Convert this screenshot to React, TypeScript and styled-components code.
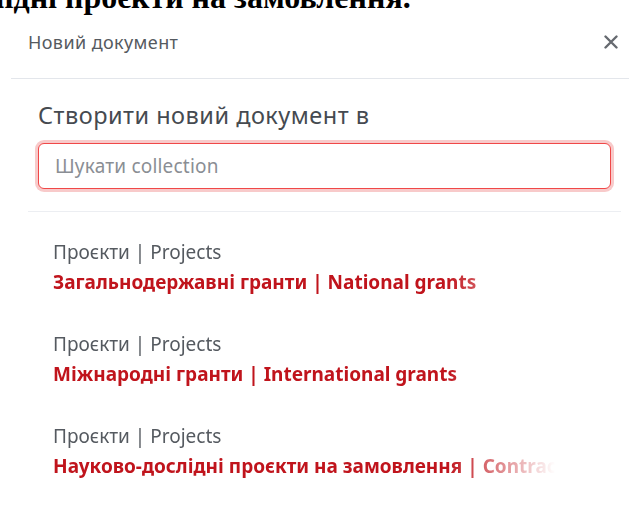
import styled, { createGlobalStyle } from 'styled-components';

const GlobalStyle = createGlobalStyle`
    html, body {
        margin: 0;
        background: #ffffff;
        overflow: hidden;
    }
    body {
        font-family: "Noto Sans", "Open Sans", sans-serif;
    }
`

// the page heading sits behind the dialog, scrolled mostly out of view
const PageHeading = styled.h1`
    margin: -21px 0 2px -192px;
    font-family: "Liberation Serif", "Times New Roman", serif;
    font-weight: 700;
    font-size: 32px;
    line-height: 36px;
    color: #000;
    white-space: nowrap;
`

const Dialog = styled.div`
    margin: 0 0 0 11px;
    display: flex;
    flex-direction: column;
`

const Header = styled.div`
    display: flex;
    align-items: center;
    justify-content: space-between;
    padding: 14px 10px 25px 17px;
    border-bottom: 1.5px solid #e3e6eb;
`

const HeaderTitle = styled.span`
    font-size: 18px;
    line-height: 22px;
    letter-spacing: 0.4px;
    color: #555a60;
`

const CloseButton = styled.button`
    border: 0;
    background: none;
    padding: 0;
    width: 16px;
    height: 16px;
    display: flex;
    align-items: center;
    justify-content: center;
    cursor: pointer;
`

const Body = styled.div`
    padding: 21px 18px 0 27px;
    display: flex;
    flex-direction: column;
`

const Prompt = styled.h2`
    margin: 0 0 13px;
    font-size: 23.5px;
    line-height: 30px;
    letter-spacing: 0.5px;
    font-weight: 400;
    color: #454a50;
`

const SearchInput = styled.input`
    box-sizing: border-box;
    width: 100%;
    height: 46px;
    margin: 0;
    padding: 0 16px;
    border: 1.5px solid #f04848;
    border-radius: 6px;
    box-shadow: 0 0 0 3px rgba(232, 80, 80, 0.3);
    font-family: inherit;
    font-size: 19px;
    letter-spacing: 0.2px;
    color: #333;
    outline: none;

    &::placeholder {
        color: #8a8e94;
    }
`

const Divider = styled.hr`
    margin: 22px 8px 0 17px;
    border: 0;
    border-top: 1.5px solid #eceef2;
`

const CollectionList = styled.ul`
    list-style: none;
    margin: 0;
    padding: 28px 0 0 42px;
    display: flex;
    flex-direction: column;
    gap: 38px;
    -webkit-mask-image: linear-gradient(to right, #000 0, #000 436px, transparent 544px);
    mask-image: linear-gradient(to right, #000 0, #000 436px, transparent 544px);
`

const CollectionItem = styled.li`
    display: flex;
    flex-direction: column;
    gap: 6px;
    white-space: nowrap;
    cursor: pointer;
`

const Parent = styled.span`
    font-size: 19px;
    line-height: 24px;
    color: #555a60;
`

const Name = styled.span`
    font-size: 19px;
    line-height: 24px;
    font-weight: 700;
    color: #c0141c;
`

const collections = [
    { parent: 'Проєкти | Projects', name: 'Загальнодержавні гранти | National grants' },
    { parent: 'Проєкти | Projects', name: 'Міжнародні гранти | International grants' },
    { parent: 'Проєкти | Projects', name: 'Науково-дослідні проєкти на замовлення | Contract research projects' },
]

function CloseIcon() {
    return (
        <svg width="14" height="14" viewBox="0 0 14 14">
            <path d="M1.5 1.5 L12.5 12.5 M12.5 1.5 L1.5 12.5" stroke="#666a70" strokeWidth="2.4" strokeLinecap="round" />
        </svg>
    )
}

export default function App() {
    return (
        <>
            <GlobalStyle />
            <PageHeading>Науково-дослідні проєкти на замовлення.</PageHeading>
            <Dialog>
                <Header>
                    <HeaderTitle>Новий документ</HeaderTitle>
                    <CloseButton aria-label="Закрити"><CloseIcon /></CloseButton>
                </Header>
                <Body>
                    <Prompt>Створити новий документ в</Prompt>
                    <SearchInput placeholder="Шукати collection" autoFocus />
                </Body>
                <Divider />
                <CollectionList>
                    {collections.map(c => (
                        <CollectionItem key={c.name}>
                            <Parent>{c.parent}</Parent>
                            <Name>{c.name}</Name>
                        </CollectionItem>
                    ))}
                </CollectionList>
            </Dialog>
        </>
    )
}
